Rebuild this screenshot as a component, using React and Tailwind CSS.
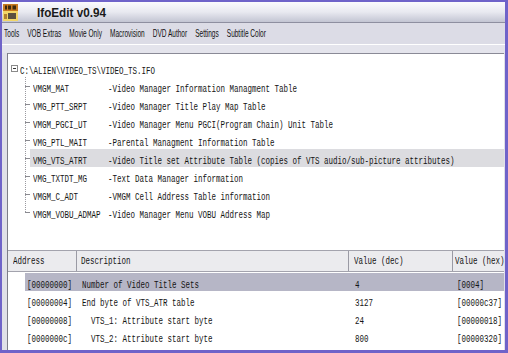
import React from "react";

const tree = [
  ["VMGM_MAT", "-Video Manager Information Managment Table"],
  ["VMG_PTT_SRPT", "-Video Manager Title Play Map Table"],
  ["VMGM_PGCI_UT", "-Video Manager Menu PGCI(Program Chain) Unit Table"],
  ["VMG_PTL_MAIT", "-Parental Managment Information Table"],
  ["VMG_VTS_ATRT", "-Video Title set Attribute Table (copies of VTS audio/sub-picture attributes)"],
  ["VMG_TXTDT_MG", "-Text Data Manager information"],
  ["VMGM_C_ADT", "-VMGM Cell Address Table information"],
  ["VMGM_VOBU_ADMAP", "-Video Manager Menu VOBU Address Map"],
];

const rows = [
  ["[00000000]", "Number of Video Title Sets", "4", "[0004]"],
  ["[00000004]", "End byte of VTS_ATR table", "3127", "[00000c37]"],
  ["[00000008]", "  VTS_1: Attribute start byte", "24", "[00000018]"],
  ["[0000000c]", "  VTS_2: Attribute start byte", "800", "[00000320]"],
];

const menu = ["Tools", "VOB Extras", "Movie Only", "Macrovision", "DVD Author", "Settings", "Subtitle Color"];

function M({ children }) {
  return (
    <span className="inline-block origin-left scale-x-75 whitespace-pre font-['Liberation_Mono',monospace] text-[10px] text-[#141414]">
      {children}
    </span>
  );
}

function Connector({ last }) {
  return (
    <svg width="22" height="18" className="shrink-0">
      <line x1="17.5" y1="0" x2="17.5" y2={last ? 9 : 18} stroke="#9a9aa0" strokeDasharray="1 1" />
      <line x1="17" y1="9.5" x2="22" y2="9.5" stroke="#8a8a90" />
    </svg>
  );
}

function Icon() {
  return (
    <svg width="15" height="17" viewBox="0 0 15 17" className="shrink-0">
      <rect x="0" y="0" width="15" height="17" fill="#e0b040" />
      <rect x="0" y="0" width="15" height="7" fill="#c87a20" />
      <rect x="2" y="1.5" width="2" height="4" fill="#3a2a10" />
      <rect x="5" y="1.5" width="3" height="4" fill="#3a2a10" />
      <rect x="9.5" y="1.5" width="3.5" height="4" fill="#3a2a10" />
      <rect x="0" y="7" width="15" height="10" fill="#f2d668" />
      <rect x="5" y="9" width="8" height="6" fill="#5a5040" />
      <rect x="1" y="10" width="3" height="5" fill="#b08030" />
    </svg>
  );
}

export default function App() {
  return (
    <div className="w-[508px] h-[353px] overflow-hidden flex flex-col bg-[#e0e0e8] border-t-2 border-l-2 border-r-[3px] border-b-[3px] border-[#6f63c9]">
      {/* Title bar */}
      <div className="h-[20px] shrink-0 flex items-center pl-[1px] bg-linear-to-b from-[#fbfbfd] via-[#e8e9f0] to-[#c3c5d3]">
        <Icon />
        <span className="ml-[19px] inline-block origin-left scale-x-[0.9] whitespace-nowrap font-['Liberation_Sans',sans-serif] text-[13px] font-bold text-[#1a1a1a] leading-none">
          IfoEdit v0.94
        </span>
      </div>
      <div className="h-px shrink-0 bg-[#8e8fa0]" />
      {/* Menu bar */}
      <div className="h-[21px] shrink-0 flex items-center pl-[2px] bg-[#dcdce6] overflow-hidden">
        <div className="inline-flex shrink-0 gap-[13px] origin-left scale-x-[0.62] whitespace-nowrap font-['Liberation_Sans',sans-serif] text-[10.5px] text-[#111]">
          {menu.map((m) => (
            <span key={m}>{m}</span>
          ))}
        </div>
      </div>
      <div className="h-px shrink-0 bg-white" />
      <div className="h-[8px] shrink-0 bg-[#e4e4ec]" />

      {/* Panels */}
      <div className="flex-1 min-h-0 flex flex-col ml-[5px] mr-[1px] border-l border-[#7d7d88]">
        {/* Tree */}
        <div className="h-[197px] shrink-0 bg-white border-t border-[#8a8a96] pt-[5px] overflow-hidden">
          <div className="h-[18px] flex items-center">
            <div className="ml-[3px] w-[7px] h-[7px] border border-[#8a8a8a] bg-white flex items-center justify-center">
              <div className="w-[3px] h-px bg-[#333]" />
            </div>
            <div className="ml-[2px]">
              <M>C:\ALIEN\VIDEO_TS\VIDEO_TS.IFO</M>
            </div>
          </div>
          {tree.map(([k, d], i) => (
            <div key={k} className="h-[18px] flex items-center">
              <Connector last={i === tree.length - 1} />
              <div
                className={
                  "flex-1 h-[18px] flex items-center pl-[3px] " +
                  (i === 4 ? "bg-[#dcdce0]" : "")
                }
              >
                <div className="w-[75px] shrink-0">
                  <M>{k}</M>
                </div>
                <div className="flex-1">
                  <M>{d}</M>
                </div>
              </div>
            </div>
          ))}
        </div>

        {/* Header */}
        <div className="h-[22px] shrink-0 flex bg-[#ebebee] border-t border-b border-[#a3a3ad]">
          <div className="w-[69px] shrink-0 flex items-center pl-[5px] border-r border-[#9a9aa4]">
            <M>Address</M>
          </div>
          <div className="w-[272px] shrink-0 flex items-center pl-[4px] border-r border-[#9a9aa4]">
            <M>Description</M>
          </div>
          <div className="w-[104px] shrink-0 flex items-center pl-[5px] border-r border-[#9a9aa4]">
            <M>Value (dec)</M>
          </div>
          <div className="flex-1 flex items-center pl-[2px]">
            <M>Value (hex)</M>
          </div>
        </div>

        {/* List */}
        <div className="flex-1 bg-white pt-px overflow-hidden">
          {rows.map(([a, d, v, h], i) => (
            <div
              key={a}
              className={
                "h-[18px] ml-[17px] pl-[2px] flex items-center " +
                (i === 0 ? "bg-[#b6b6c6]" : "")
              }
            >
              <div className="w-[55px] shrink-0">
                <M>{a}</M>
              </div>
              <div className="w-[273px] shrink-0">
                <M>{d}</M>
              </div>
              <div className="w-[102px] shrink-0">
                <M>{v}</M>
              </div>
              <div className="flex-1">
                <M>{h}</M>
              </div>
            </div>
          ))}
        </div>
      </div>
    </div>
  );
}
